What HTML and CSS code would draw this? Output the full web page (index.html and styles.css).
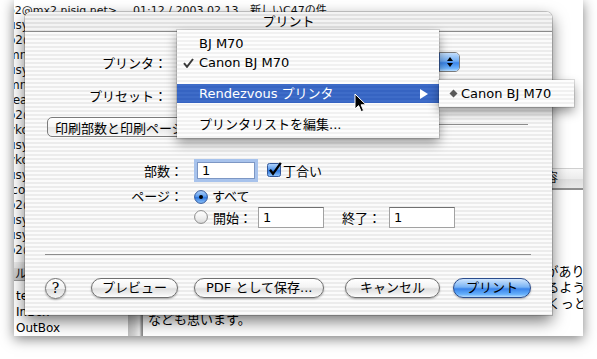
FILE: index.html
```html
<!DOCTYPE html>
<html lang="ja">
<head>
  <meta charset="UTF-8" />
  <meta name="viewport" content="width=device-width, initial-scale=1.0"/>
  <title>プリント</title>
  <link rel="stylesheet" href="styles.css">
</head>
<body>
<div class="desktop">

  <!-- mail window behind the sheet -->
  <div class="backwin">
    <div class="toprow">
      <span class="from">o2@mx2.nisiq.net&gt;</span>
      <span class="date">01:12 / 2003.02.13</span>
      <span class="subj">新しいC47の件</span>
    </div>
    <div class="msglist">
      <div class="row">usyu@asahi-net.or.jp</div>
      <div class="row">o2@mx2.nisiq.net</div>
      <div class="row">mn@apple-club.jp</div>
      <div class="row">usyu@asahi-net.or.jp</div>
      <div class="row">mn@apple-club.jp</div>
      <div class="row">tea@macfan.jp</div>
      <div class="row">o2@mx2.nisiq.net</div>
      <div class="row">ykoba@inter.net</div>
      <div class="row">usyu@asahi-net.or.jp</div>
      <div class="row">ykoba@inter.net</div>
      <div class="row">usyu@asahi-net.or.jp</div>
      <div class="row">icom@canon.co.jp</div>
      <div class="row">o2@mx2.nisiq.net</div>
      <div class="row">usyu@asahi-net.or.jp</div>
      <div class="row">usyu@asahi-net.or.jp</div>
      <div class="row">o2@mx2.nisiq.net</div>
    </div>
    <div class="splitter"></div>
    <div class="preview">
      <div class="pblank"></div>
      <div class="phead">
        <span class="col subject">件名</span>
        <span class="col">内容</span>
      </div>
      <div class="pbody">
        鈴木様<br>
        お世話になっております。<br>
        プリンタの件でご連絡いたします。<br>
        <br>
        先日お送りしたプリンタの設定の手順書の件についてですが、第2版がありました。<br>
        ネットワーク上のプリンタ一覧を確認したところ、同じ機種が2台あるようです。<br>
        ただ、どちらを選んでも、印刷が始まる直前に一度だけ止まって、びくっとします。<br>
        なども思います。
      </div>
    </div>
    <div class="mbhead">ルート</div>
    <div class="mblist">
      <div>temp</div>
      <div>InBox</div>
      <div>OutBox</div>
    </div>
  </div>

  <!-- print dialog -->
  <div class="dialog">
    <div class="titlebar">プリント</div>
    <div class="dbody">

      <div class="prow">
        <span class="plabel">プリンタ：</span>
        <div class="popup printer">
          <span class="ptext">Canon BJ M70</span>
          <span class="cap">
            <svg width="8" height="12" viewBox="0 0 8 12"><path d="M4 1 L7 5 L1 5 Z M1 7 L7 7 L4 11 Z" fill="#000"/></svg>
          </span>
        </div>
      </div>

      <div class="prow preset">
        <span class="plabel">プリセット：</span>
        <div class="popup printer">
          <span class="ptext">標準</span>
          <span class="cap">
            <svg width="8" height="12" viewBox="0 0 8 12"><path d="M4 1 L7 5 L1 5 Z M1 7 L7 7 L4 11 Z" fill="#000"/></svg>
          </span>
        </div>
      </div>

      <div class="panesel">
        <div class="popup pane">
          <span>印刷部数と印刷ページ</span>
          <svg width="7" height="11" viewBox="0 0 7 11"><path d="M3.5 0.5 L6.5 4 L0.5 4 Z M0.5 6.5 L6.5 6.5 L3.5 10 Z" fill="#222"/></svg>
        </div>
        <div class="rule"></div>
      </div>

      <div class="form">
        <span class="flabel">部数：</span>
        <div class="fctl">
          <div class="field focus">1</div>
          <svg class="checkbox" width="15" height="15" viewBox="0 0 15 15">
            <defs>
              <linearGradient id="cbg" x1="0" y1="0" x2="0" y2="1">
                <stop offset="0" stop-color="#b6d6fb"/>
                <stop offset="0.45" stop-color="#5b9cee"/>
                <stop offset="0.55" stop-color="#2f78e0"/>
                <stop offset="1" stop-color="#93c8fc"/>
              </linearGradient>
            </defs>
            <rect x="0.5" y="1.5" width="13" height="13" rx="2" fill="url(#cbg)" stroke="#34589a"/>
            <path d="M3 7.8 L6 11.8 L13.8 0.8" fill="none" stroke="#000" stroke-width="2.3"/>
          </svg>
          <span class="cblabel">丁合い</span>
        </div>

        <span class="flabel pg">ページ：</span>
        <div class="fctl pg">
          <svg class="radio" width="14" height="14" viewBox="0 0 14 14">
            <defs>
              <linearGradient id="rbg" x1="0" y1="0" x2="0" y2="1">
                <stop offset="0" stop-color="#b6d6fb"/>
                <stop offset="0.45" stop-color="#5b9cee"/>
                <stop offset="0.55" stop-color="#2f78e0"/>
                <stop offset="1" stop-color="#93c8fc"/>
              </linearGradient>
            </defs>
            <circle cx="7" cy="7" r="6.4" fill="url(#rbg)" stroke="#34589a"/>
            <circle cx="7" cy="7" r="2" fill="#000"/>
          </svg>
          <span class="rlabel">すべて</span>
        </div>

        <span></span>
        <div class="fctl">
          <svg class="radio" width="14" height="14" viewBox="0 0 14 14">
            <defs>
              <linearGradient id="rwg" x1="0" y1="0" x2="0" y2="1">
                <stop offset="0" stop-color="#ffffff"/>
                <stop offset="0.5" stop-color="#f2f2f2"/>
                <stop offset="1" stop-color="#d9d9d9"/>
              </linearGradient>
            </defs>
            <circle cx="7" cy="7" r="6.4" fill="url(#rwg)" stroke="#8a8a8a"/>
          </svg>
          <span class="rlabel from">開始：</span>
          <div class="field range">1</div>
          <span class="tolabel">終了：</span>
          <div class="field range last">1</div>
        </div>
      </div>

      <div class="sep"></div>

      <div class="buttons">
        <div class="help">?</div>
        <div class="btn preview-btn">プレビュー</div>
        <div class="btn pdf-btn">PDF として保存...</div>
        <div class="btn cancel-btn">キャンセル</div>
        <div class="btn default">プリント</div>
      </div>

    </div>
  </div>

  <!-- open printer menu -->
  <div class="menu">
    <div class="item"><span class="mark"></span>BJ M70</div>
    <div class="item">
      <span class="mark"><svg width="11" height="10" viewBox="0 0 11 10"><path d="M1 5.2 L4 8.8 L10 1" fill="none" stroke="#3a3a3a" stroke-width="2"/></svg></span>Canon BJ M70
    </div>
    <div class="msep"></div>
    <div class="item on">
      <span class="mark"></span>Rendezvous プリンタ
      <svg class="arrow" width="8" height="10" viewBox="0 0 8 10"><path d="M0 0 L8 5 L0 10 Z" fill="#fff"/></svg>
    </div>
    <div class="msep"></div>
    <div class="item"><span class="mark"></span>プリンタリストを編集...</div>
  </div>

  <div class="submenu">
    <div class="item">
      <span class="mark"><svg width="9" height="9" viewBox="0 0 9 9"><path d="M4.5 0.5 L8.5 4.5 L4.5 8.5 L0.5 4.5 Z" fill="#5a5a5a"/></svg></span>Canon BJ M70
    </div>
  </div>

  <svg class="cursor" width="13" height="20" viewBox="0 0 13 20">
    <path d="M1 1 L1 16 L4.6 12.6 L7.2 18.6 L9.6 17.6 L7.1 11.8 L12 11.8 Z" fill="#000" stroke="#fff" stroke-width="1" stroke-linejoin="round"/>
  </svg>

</div>
</body>
</html>
```

FILE: styles.css
```css
* {
  box-sizing: border-box;
}

body {
  margin: 0;
  background: #fff;
  font-family: "DejaVu Sans", "Noto Sans CJK JP", sans-serif;
  font-size: 13px;
  color: #000;
}

.desktop {
  position: relative;
  width: 597px;
  height: 359px;
  overflow: hidden;
}

/* ---- mail window in the back ---- */

.backwin {
  position: absolute;
  left: 14px;
  top: 0;
  width: 569px;
  height: 336px;
  background: #fff;
  box-shadow: 0 3px 12px rgba(0, 0, 0, 0.5);
  display: grid;
  grid-template-columns: 114px 15px 1fr;
  grid-template-rows: 18px 244px 19px 1fr;
  overflow: hidden;
  font-size: 12px;
  color: #111;
}

.toprow {
  grid-column: 1 / -1;
  display: flex;
  white-space: nowrap;
  padding-top: 3px;
  line-height: 15px;
  font-size: 11px;
}

.toprow .from {
  flex: none;
  width: 125px;
  margin-left: -6px;
}

.toprow .date {
  flex: none;
  width: 117px;
}

.msglist {
  grid-column: 1;
  grid-row: 2;
  overflow: hidden;
  line-height: 15px;
}

.msglist .row {
  margin-left: -6px;
  white-space: nowrap;
}

.splitter {
  grid-column: 2;
  grid-row: 2 / 5;
  background: linear-gradient(to right, #bfbfbf, #d4d4d4 45%, #ebebeb 75%, #8c8c8c 93%, #8c8c8c);
}

.preview {
  grid-column: 3;
  grid-row: 2 / 5;
  display: flex;
  flex-direction: column;
  overflow: hidden;
}

.pblank {
  flex: none;
  height: 150px;
}

.phead {
  flex: none;
  height: 22px;
  display: flex;
  border-top: 1px solid #cfcfcf;
  border-bottom: 2px solid #8e8e8e;
  background: linear-gradient(#f8f8f8, #ececec 50%, #dedede 52%, #e8e8e8);
  line-height: 19px;
  font-size: 12px;
  white-space: nowrap;
}

.phead .col {
  padding-left: 3px;
}

.phead .col.subject {
  width: 388px;
  border-right: 1px solid #b8b8b8;
}

.pbody {
  padding: 10px 0 0 5px;
  line-height: 16px;
  font-size: 13px;
  white-space: nowrap;
  color: #000;
}

.mbhead {
  grid-column: 1;
  grid-row: 3;
  padding: 6px 0 0 1px;
  line-height: 13px;
  white-space: nowrap;
  background: linear-gradient(#ededed 0, #e4e4e4 6px, #d2d2d2 6px, #c3c3c3);
  border-bottom: 1px solid #9a9a9a;
}

.mblist {
  grid-column: 1;
  grid-row: 4;
  padding: 7px 0 0 2px;
  line-height: 16px;
  color: #000;
}

/* ---- print dialog ---- */

.dialog {
  position: absolute;
  left: 25px;
  top: 12px;
  width: 527px;
  height: 303px;
  border-radius: 6px 6px 0 0;
  background: repeating-linear-gradient(to bottom, #fbfbfb 0, #fbfbfb 2px, #ececec 2px, #ececec 4px);
  box-shadow: 0 0 0 1px rgba(0, 0, 0, 0.18), 0 6px 16px rgba(0, 0, 0, 0.55);
  overflow: hidden;
}

.titlebar {
  height: 20px;
  border-bottom: 1px solid #8a8a8a;
  background: repeating-linear-gradient(to bottom, #f3f3f3 0, #f3f3f3 2px, #e1e1e1 2px, #e1e1e1 4px);
  text-align: center;
  line-height: 19px;
}

.dbody {
  padding: 20px 21px 0 20px;
}

.prow {
  display: flex;
  align-items: center;
  height: 20px;
}

.prow.preset {
  margin-top: 13px;
}

.plabel {
  width: 122px;
  text-align: right;
  white-space: nowrap;
}

.popup {
  display: flex;
  align-items: center;
  height: 20px;
  border: 1px solid #7b7b7b;
  border-radius: 5px;
  background: linear-gradient(#ffffff, #f4f4f4 50%, #e6e6e6 52%, #f7f7f7);
  white-space: nowrap;
}

.popup.printer {
  width: 283px;
  margin-left: 10px;
  padding-left: 9px;
}

.popup .cap {
  margin-left: auto;
  width: 20px;
  height: 100%;
  display: flex;
  align-items: center;
  justify-content: center;
  border-left: 1px solid #3a62a8;
  border-radius: 0 4px 4px 0;
  background: linear-gradient(#c3defc, #70adf4 45%, #3b86ea 55%, #6eb3fb 85%, #b6dcff);
}

.panesel {
  display: flex;
  margin-top: 12px;
}

.popup.pane {
  margin-left: 2px;
  padding: 0 9px 0 7px;
  gap: 14px;
}

.rule {
  flex: 1;
  height: 0;
  margin: 7px 3px 0 6px;
  border-top: 1px solid #8c8c8c;
}

.form {
  display: grid;
  grid-template-columns: 138px 1fr;
  grid-template-rows: 21px 25px 22px;
  column-gap: 11px;
  align-items: center;
  margin-top: 23px;
}

.flabel {
  text-align: right;
  white-space: nowrap;
}

.flabel.pg,
.fctl.pg {
  align-self: end;
  height: 18px;
  line-height: 18px;
}

.fctl {
  display: flex;
  align-items: center;
  white-space: nowrap;
}

.field {
  height: 21px;
  padding-left: 4px;
  border: 1px solid #a2a2a2;
  border-top-color: #6f6f6f;
  background: #fff;
  line-height: 19px;
}

.field.focus {
  width: 58px;
  height: 17px;
  margin-left: 3px;
  line-height: 15px;
  border-color: #7d97c4;
  box-shadow: 0 0 0 3px #a8c3ec;
}

.field.range {
  width: 66px;
  margin-left: 6px;
}

.field.range.last {
  margin-left: 8px;
}

.checkbox {
  margin: -2px 0 0 12px;
}

.cblabel {
  margin-left: 1px;
}

.rlabel {
  margin-left: 4px;
}

.rlabel.from {
  margin-left: 5px;
}

.tolabel {
  margin-left: 18px;
}

.sep {
  margin-top: 26px;
  border-top: 1px solid #8c8c8c;
}

.buttons {
  display: flex;
  align-items: center;
  margin-top: 23px;
  height: 20px;
}

.help {
  width: 21px;
  height: 21px;
  border: 1px solid #777;
  border-radius: 50%;
  background: linear-gradient(#ffffff, #f1f1f1 50%, #dcdcdc 55%, #f6f6f6);
  box-shadow: 0 1px 2px rgba(0, 0, 0, 0.3);
  text-align: center;
  line-height: 19px;
  font-family: "DejaVu Serif", serif;
  font-size: 14px;
}

.btn {
  height: 20px;
  padding: 0 11px;
  border: 1px solid #707070;
  border-radius: 10px;
  background: linear-gradient(#ffffff, #f3f3f3 45%, #dedede 55%, #f2f2f2 85%, #ffffff);
  box-shadow: 0 1px 2px rgba(0, 0, 0, 0.3);
  line-height: 18px;
  white-space: nowrap;
}

.preview-btn {
  margin-left: 25px;
  padding: 0 10px;
}

.pdf-btn {
  margin-left: 16px;
}

.cancel-btn {
  margin-left: auto;
  padding: 0 14px;
}

.btn.default {
  margin-left: 13px;
  padding: 0 12px;
  border-color: #2b4c8c;
  background: linear-gradient(#cfe5fd, #79b3f5 45%, #3a84ea 55%, #66b0fb 85%, #b8deff);
}

/* ---- menus over the dialog ---- */

.menu,
.submenu {
  position: absolute;
  padding: 4px 0;
  background: repeating-linear-gradient(to bottom, #fdfdfd 0, #fdfdfd 2px, #f1f1f1 2px, #f1f1f1 4px);
  box-shadow: 0 0 0 1px rgba(0, 0, 0, 0.12), 0 5px 11px rgba(0, 0, 0, 0.4);
  white-space: nowrap;
}

.menu {
  left: 177px;
  top: 30px;
  width: 262px;
}

.submenu {
  left: 439px;
  top: 80px;
  width: 135px;
}

.item {
  display: flex;
  align-items: center;
  height: 19px;
  padding-left: 6px;
  line-height: 19px;
}

.item .mark {
  flex: none;
  width: 16px;
  display: flex;
  align-items: center;
}

.submenu .item {
  padding-left: 10px;
}

.submenu .item .mark {
  width: 12px;
}

.item.on {
  color: #fff;
  background: repeating-linear-gradient(to bottom, #3e6cc8 0, #3e6cc8 2px, #3664c2 2px, #3664c2 4px);
}

.item .arrow {
  margin-left: auto;
  margin-right: 11px;
}

.msep {
  height: 12px;
}

.cursor {
  position: absolute;
  left: 354px;
  top: 93px;
}
```
